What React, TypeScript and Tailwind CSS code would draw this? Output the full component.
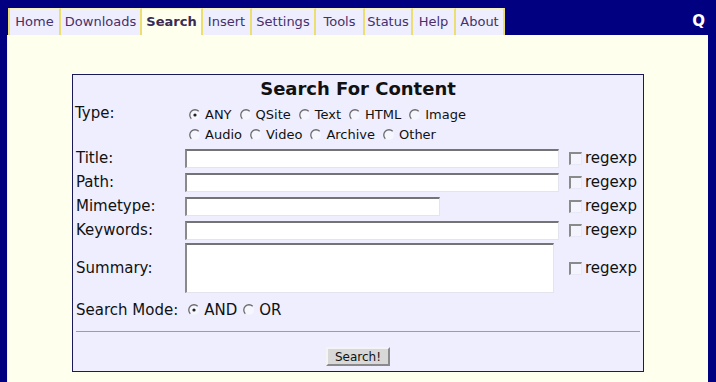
const tabs: [string, number][] = [
    ["Home", 51],
    ["Downloads", 81],
    ["Search", 61],
    ["Insert", 49],
    ["Settings", 64],
    ["Tools", 49],
    ["Status", 48],
    ["Help", 43],
    ["About", 49],
];

function Radio({ checked = false }: { checked?: boolean }) {
    return (
        <svg width="12" height="12" viewBox="0 0 12 12" className="shrink-0">
            <circle cx="6" cy="6" r="5" fill="#f6f6ff" />
            <path d="M2.3 9.7 A5 5 0 0 1 9.7 2.3" stroke="#6b6b6b" strokeWidth="1.3" fill="none" />
            {checked && <circle cx="6" cy="6" r="1.6" fill="#222" />}
        </svg>
    );
}

function RadioItem({ label, checked, big }: { label: string; checked?: boolean; big?: boolean }) {
    return (
        <span className={"flex items-center " + (big ? "gap-[4px] text-[15px] mr-[6px]" : "gap-[4px] text-[13px] mr-[8px]")}>
            <Radio checked={checked} />
            {label}
        </span>
    );
}

function Field({ w, h = 19 }: { w: number; h?: number }) {
    return (
        <div
            className="bg-white border-t-2 border-l-2 border-t-[#747474] border-l-[#8a8a8a] border-b border-r border-b-[#e4e4ee] border-r-[#e4e4ee]"
            style={{ width: w, height: h }}
        />
    );
}

function Regexp() {
    return (
        <div className="flex items-center gap-[3px] pl-[1px] text-[15px]">
            <span className="w-[13px] h-[13px] border-t-2 border-l-2 border-t-[#8a8a8a] border-l-[#8a8a8a] border-b border-r border-b-[#e8e8f4] border-r-[#e8e8f4] bg-[#f4f4ff]" />
            regexp
        </div>
    );
}

function Row({ label, children, right, h, className = "" }: { label: string; children?: React.ReactNode; right?: React.ReactNode; h: number; className?: string }) {
    return (
        <div className={"grid grid-cols-[109px_383px_72px] items-center " + className} style={{ height: h }}>
            <div className="text-[15px]">{label}</div>
            <div>{children}</div>
            <div>{right}</div>
        </div>
    );
}

export default function App() {
    return (
        <div className="h-screen overflow-hidden bg-[#000080] pl-[7px] pr-[8px] pt-[8px] font-['DejaVu_Sans',sans-serif] text-[#111]">
            <div className="flex h-[27px] items-stretch">
                <div className="flex ml-[1px] border-l-2 border-[#eadf70]">
                    {tabs.map(([t, w]) => (
                        <div
                            key={t}
                            style={{ width: w }}
                            className={
                                "flex items-center justify-center border-r-2 border-t border-r-[#eadf70] border-t-[#f6f2c0] text-[13px] " +
                                (t === "Search" ? "bg-[#ffffee] font-bold text-[#3a2a55]" : "bg-[#eeeeff] text-[#46306b]")
                            }
                        >
                            {t}
                        </div>
                    ))}
                </div>
                <div className="ml-auto mr-[3px] flex items-center text-white font-bold text-[15px]">Q</div>
            </div>
            <div className="bg-[#ffffee] h-full pt-[39px] border-l border-[#f8f4d0]">
                <div className="mx-auto w-[572px] border border-[#1a1a5a] bg-[#eeeeff] p-[3px] pb-[4px]">
                    <div className="h-[20px] flex items-center justify-center text-[18px] font-bold">Search For Content</div>
                    <div className="grid grid-cols-[109px_383px_72px] mt-[7px]">
                        <div className="text-[15px] leading-[17px] -ml-[1px]">Type:</div>
                        <div className="pl-[4px]">
                            <div className="flex h-[20px] items-center">
                                <RadioItem label="ANY" checked />
                                <RadioItem label="QSite" />
                                <RadioItem label="Text" />
                                <RadioItem label="HTML" />
                                <RadioItem label="Image" />
                            </div>
                            <div className="flex h-[20px] items-center">
                                <RadioItem label="Audio" />
                                <RadioItem label="Video" />
                                <RadioItem label="Archive" />
                                <RadioItem label="Other" />
                            </div>
                        </div>
                        <div />
                    </div>
                    <Row label="Title:" h={19} className="mt-[2px]" right={<Regexp />}>
                        <Field w={374} />
                    </Row>
                    <Row label="Path:" h={19} className="mt-[5px]" right={<Regexp />}>
                        <Field w={374} />
                    </Row>
                    <Row label="Mimetype:" h={19} className="mt-[5px]" right={<Regexp />}>
                        <Field w={255} />
                    </Row>
                    <Row label="Keywords:" h={19} className="mt-[5px]" right={<Regexp />}>
                        <Field w={374} />
                    </Row>
                    <Row label="Summary:" h={50} className="mt-[5px]" right={<Regexp />}>
                        <Field w={369} h={50} />
                    </Row>
                    <div className="flex items-center h-[20px] mt-[7px] text-[15px]">
                        <span className="mr-[10px]">Search Mode:</span>
                        <RadioItem label="AND" checked big />
                        <RadioItem label="OR" big />
                    </div>
                    <div className="mt-[11px] border-t border-[#9a9aa8]" />
                    <div className="flex justify-center mt-[15px] mb-[1px]">
                        <button className="h-[19px] px-[7px] bg-[#d8d8d8] border-t-2 border-l-2 border-t-[#f4f4f4] border-l-[#f4f4f4] border-b-2 border-r-2 border-b-[#8a8a8a] border-r-[#8a8a8a] text-[12px] leading-none">
                            Search!
                        </button>
                    </div>
                </div>
            </div>
        </div>
    );
}
